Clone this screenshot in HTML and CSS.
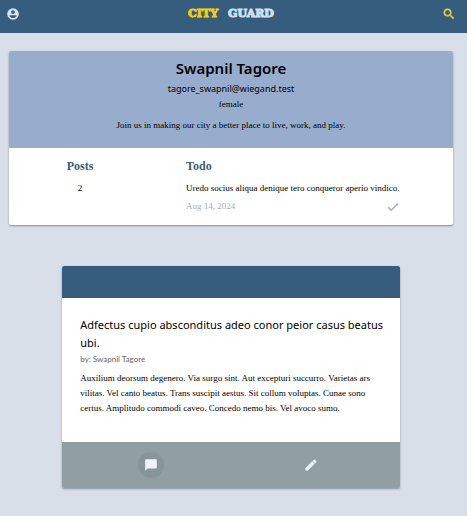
FILE: index.html
```html
<!DOCTYPE html>
<html lang="en">
<head>
<meta charset="utf-8">
<meta name="viewport" content="width=device-width, initial-scale=1">
<title>City Guard</title>
<link rel="stylesheet" href="styles.css">
</head>
<body>
<header class="topbar">
  <button class="icon-button" type="button" aria-label="Account">
    <svg class="icon" viewBox="0 0 24 24"><path fill-rule="evenodd" d="M12 2a10 10 0 1 0 0 20 10 10 0 0 0 0-20zM12 5.500a3.200 3.200 0 1 1 0 6.400 3.200 3.200 0 0 1 0-6.400zM6 14h12c0 3-3 5-6 5s-6-2-6-5z"/></svg>
  </button>
  <a class="brand" href="#"><span class="brand-city">CITY</span><span>GUARD</span></a>
  <button class="icon-button search" type="button" aria-label="Search">
    <svg class="icon" viewBox="0 0 24 24"><path stroke="currentColor" stroke-width="1" d="M15.500 14h-.79l-.28-.27A6.471 6.471 0 0 0 16 9.500 6.500 6.500 0 1 0 9.500 16c1.610 0 3.090-.59 4.230-1.570l.27.280v.790l5 4.990L20.490 19l-4.990-5zm-6 0C7.010 14 5 11.990 5 9.500S7.010 5 9.500 5 14 7.010 14 9.500 11.990 14 9.500 14z"/></svg>
  </button>
</header>
<main class="page">
  <section class="card profile">
    <div class="profile-head">
      <h1 class="name">Swapnil Tagore</h1>
      <p class="email">tagore_swapnil@wiegand.test</p>
      <p class="gender">female</p>
      <p class="bio">Join us in making our city a better place to live, work, and play.</p>
    </div>
    <div class="profile-body">
      <div class="posts">
        <h2 class="label">Posts</h2>
        <p>2</p>
      </div>
      <div class="todo">
        <h2 class="label">Todo</h2>
        <p>Uredo socius aliqua denique tero conqueror aperio vindico.</p>
        <div class="todo-foot">
          <time datetime="2024-08-14">Aug 14, 2024</time>
          <button class="icon-button check" type="button" aria-label="Mark done">
            <svg class="icon" viewBox="0 0 24 24"><path stroke="currentColor" stroke-width="1" d="M9 16.170 4.830 12l-1.420 1.410L9 19 21 7l-1.410-1.410z"/></svg>
          </button>
        </div>
      </div>
    </div>
  </section>
  <article class="card post">
    <div class="post-banner"></div>
    <div class="post-body">
      <h2 class="post-title">Adfectus cupio absconditus adeo conor peior casus beatus ubi.</h2>
      <p class="author">by: Swapnil Tagore</p>
      <p class="post-text">Auxilium deorsum degenero. Via surgo sint. Aut excepturi succurro. Varietas ars vilitas. Vel canto beatus. Trans suscipit aestus. Sit collum voluptas. Cunae sono certus. Amplitudo commodi caveo. Concedo nemo bis. Vel avoco sumo.</p>
    </div>
    <footer class="post-actions">
      <button class="action action-active" type="button" aria-label="Comments">
        <svg class="icon" viewBox="0 0 24 24"><path d="M20 2H4c-1.100 0-2 .9-2 2v18l4-4h14c1.100 0 2-.9 2-2V4c0-1.100-.9-2-2-2z"/></svg>
      </button>
      <button class="action" type="button" aria-label="Edit">
        <svg class="icon" viewBox="0 0 24 24"><path d="M3 17.250V21h3.750L17.810 9.940l-3.750-3.750L3 17.250zM20.710 7.040a1 1 0 0 0 0-1.410l-2.340-2.340a1 1 0 0 0-1.410 0l-1.830 1.830 3.750 3.750 1.830-1.830z" stroke="currentColor" stroke-width="1"/></svg>
      </button>
    </footer>
  </article>
</main>
</body>
</html>
```
FILE: styles.css
```css
* { box-sizing: border-box; }

body {
  margin: 0;
  background: #d9dfe9;
  color: #000;
  font: 9px/15px "Liberation Serif", serif;
}

h1, h2, p { margin: 0; }

button {
  padding: 0;
  border: 0;
  background: none;
  color: inherit;
}

.icon {
  display: block;
  width: 14px;
  height: 14px;
  fill: currentColor;
}

.topbar {
  display: grid;
  grid-template-columns: 1fr auto 1fr;
  align-items: center;
  height: 33px;
  padding: 0 11px 5px 6px;
  background: #375d7e;
  color: #d5e4f7;
}

.search {
  justify-self: end;
  color: #e3cd45;
}

.brand {
  display: flex;
  gap: 10px;
  color: #d0e1f6;
  font: 900 11px/16px "DejaVu Serif", serif;
  text-decoration: none;
  -webkit-text-stroke: 1px currentColor;
}

.brand-city { color: #f3cd16; }

.page { padding: 18px 14px 27px 9px; }

.card {
  overflow: hidden;
  border-radius: 2px;
  background: #fff;
  box-shadow: 0 1px 2px rgba(40, 65, 90, 0.5);
}

.profile-head {
  min-height: 97px;
  padding: 7px 16px 15px;
  background: #98adcd;
  text-align: center;
}

.name {
  font: 600 15px/20px "Noto Sans", sans-serif;
}

.email {
  margin-top: 3px;
  font: 9px/16px "Noto Sans", sans-serif;
}

.bio { margin-top: 6px; }

.profile-body {
  display: grid;
  grid-template-columns: 32% 1fr;
  padding: 10px 0 11px;
}

.posts { text-align: center; }

.label {
  margin-bottom: 6px;
  color: #375d7e;
  font-size: 12px;
  line-height: 17px;
}

.todo {
  justify-self: start;
  margin-left: 35px;
}

.todo-foot {
  display: flex;
  justify-content: space-between;
  align-items: center;
  margin-top: 3px;
  color: #98adcd;
}

.check { color: #9cb0c4; }

.post {
  width: 76%;
  margin: 41px auto 0;
}

.post-banner {
  height: 32px;
  background: #375d7e;
}

.post-body { padding: 18px 12px 26px 18px; }

.post-title {
  font: 11px/18px "Noto Sans", sans-serif;
}

.author {
  color: #666;
  font: 8px/14px Lato, sans-serif;
}

.post-text { margin-top: 5px; }

.post-actions {
  display: grid;
  grid-template-columns: 1fr 1fr;
  justify-items: center;
  padding: 10px 9px 10px;
  background: #919fa4;
}

.action {
  display: grid;
  place-items: center;
  width: 26px;
  height: 26px;
  border-radius: 50%;
  color: #edf3f8;
}

.action-active { background: #87959a; }
```
